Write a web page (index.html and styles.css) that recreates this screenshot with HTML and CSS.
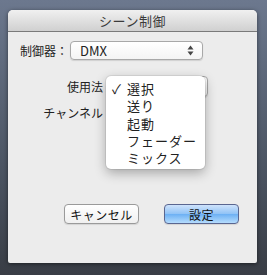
FILE: index.html
```html
<!DOCTYPE html>
<html lang="ja">
<head>
  <meta charset="UTF-8">
  <title>シーン制御</title>
  <link rel="stylesheet" href="styles.css">
</head>
<body>
  <div class="window">
    <div class="titlebar">シーン制御</div>
    <div class="content">
      <div class="row-top">
        <span class="label">制御器：</span>
        <div class="select wide">
          <span>DMX</span>
          <span class="arrows">
            <svg width="7" height="11" viewBox="0 0 7 11"><path d="M3.5 0.5L6.5 4.5H0.5Z M3.5 10.5L6.5 6.5H0.5Z" fill="#444"/></svg>
          </span>
        </div>
      </div>

      <div class="form">
        <span class="label right">使用法</span>
        <div class="select small"></div>
        <span class="label right">チャンネル</span>
        <div class="field"></div>
      </div>

      <div class="buttons">
        <button class="btn">キャンセル</button>
        <button class="btn primary">設定</button>
      </div>

      <ul class="menu">
        <li><span class="check">✓</span>選択</li>
        <li><span class="check"></span>送り</li>
        <li><span class="check"></span>起動</li>
        <li><span class="check"></span>フェーダー</li>
        <li><span class="check"></span>ミックス</li>
      </ul>
    </div>
  </div>
</body>
</html>
```

FILE: styles.css
```css
* {
  box-sizing: border-box;
}

body {
  margin: 0;
  height: 275px;
  background: linear-gradient(#6c788e, #4c5563 60%, #393d45);
  font-family: "Noto Sans CJK JP", "Noto Sans", sans-serif;
  color: #222;
  overflow: hidden;
}

.window {
  margin: 10px 0 0 8px;
  width: 249px;
  height: 253px;
  background: #ececec;
  border-radius: 5px 5px 2px 2px;
  box-shadow: 0 1px 4px rgba(0,0,0,0.5);
  display: flex;
  flex-direction: column;
}

.titlebar {
  height: 22px;
  border-radius: 5px 5px 0 0;
  background: linear-gradient(#f0f0f0, #d0d0d0);
  border-bottom: 1px solid #7a7a7a;
  text-align: center;
  font-size: 13px;
  line-height: 21px;
  letter-spacing: 0.5px;
  color: #3a3a3a;
}

.content {
  position: relative;
  flex: 1;
  padding: 9px 0 0 12px;
}

.label {
  font-size: 12px;
  line-height: 19px;
}

.row-top {
  display: flex;
  align-items: center;
}

.row-top .label {
  width: 50px;
}

.select {
  height: 19px;
  background: linear-gradient(#ffffff, #f4f4f4);
  border: 1px solid #a8a8a8;
  border-radius: 4px;
  box-shadow: 0 1px 1px rgba(0,0,0,0.12);
  font-size: 13px;
  line-height: 17px;
  display: flex;
  align-items: center;
  justify-content: space-between;
  padding: 0 8px 0 9px;
}

.select.wide {
  width: 133px;
}

.arrows {
  display: flex;
}

.select.small {
  width: 101px;
  height: 21px;
}

.form {
  display: grid;
  grid-template-columns: 83px 101px;
  column-gap: 4px;
  row-gap: 6px;
  margin-top: 16px;
  align-items: center;
}

.right {
  text-align: right;
}

.field {
  height: 19px;
}

.buttons {
  display: flex;
  gap: 25px;
  margin: 82px 0 0 44px;
}

.btn {
  width: 75px;
  height: 20px;
  padding: 0;
  font: inherit;
  font-size: 12px;
  letter-spacing: 0.5px;
  color: #111;
  background: linear-gradient(#ffffff, #f0f0f0);
  border: 1px solid #9a9a9a;
  border-radius: 4px;
  box-shadow: 0 1px 1px rgba(0,0,0,0.1);
}

.btn.primary {
  background: linear-gradient(#cfe3fb, #8fc2f6 50%, #6cb0f4 51%, #b5dcfd);
  border-color: #5a6690;
}

.menu {
  position: absolute;
  left: 98px;
  top: 44px;
  width: 99px;
  margin: 0;
  padding: 4px 0 0;
  height: 93px;
  list-style: none;
  background: #fff;
  border-radius: 5px;
  box-shadow: 0 4px 12px rgba(0,0,0,0.3), 0 0 0 1px rgba(0,0,0,0.07);
  font-size: 13px;
  letter-spacing: 1px;
}

.menu li {
  height: 17.3px;
  line-height: 17px;
  display: flex;
}

.check {
  width: 21px;
  padding-left: 6px;
  letter-spacing: 0;
}
```
